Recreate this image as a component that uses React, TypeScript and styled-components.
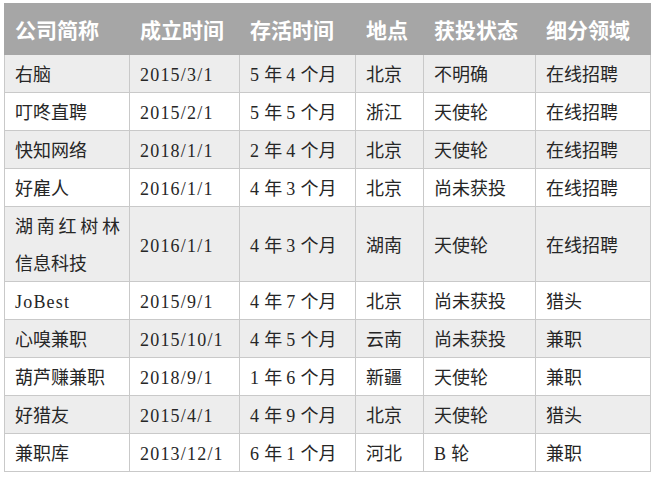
import React from "react";
import styled, { createGlobalStyle } from "styled-components";

const Global = createGlobalStyle`
  html, body { margin: 0; padding: 0; background: #ffffff; }
  body { font-family: "Noto Sans CJK SC", "Liberation Sans", sans-serif; }
`;

const Page = styled.div`
  padding: 3px 4px;
`;

const Table = styled.table`
  border-collapse: collapse;
  width: 646px;
  table-layout: fixed;
  color: #262626;
`;

const Col = styled.col<{ $w: number }>`
  width: ${(p) => p.$w}px;
`;

const HeadCell = styled.th`
  background: #a6a6a6;
  color: #ffffff;
  font-weight: 700;
  font-size: 21px;
  line-height: 49px;
  text-align: left;
  height: 50px;
  padding: 0 0 0 10px;
  border: 1px solid #a6a6a6;
  white-space: nowrap;
`;

const Row = styled.tr<{ $shade: boolean }>`
  background: ${(p) => (p.$shade ? "#ededed" : "#ffffff")};
`;

const Cell = styled.td<{ $justify?: boolean }>`
  border: 1px solid #c9c9c9;
  font-size: 18px;
  line-height: 37px;
  padding: 0 9px 0 10px;
  vertical-align: middle;
  text-align: ${(p) => (p.$justify ? "justify" : "left")};
  text-align-last: left;
`;

const Latin = styled.span`
  font-family: "Liberation Serif", serif;
  font-size: 18px;
  letter-spacing: 1.2px;
  line-height: 1;
`;

const cols = [125, 110, 116, 68, 112, 115];
const headers = ["公司简称", "成立时间", "存活时间", "地点", "获投状态", "细分领域"];

const rows: string[][] = [
  ["右脑", "2015/3/1", "5 年 4 个月", "北京", "不明确", "在线招聘"],
  ["叮咚直聘", "2015/2/1", "5 年 5 个月", "浙江", "天使轮", "在线招聘"],
  ["快知网络", "2018/1/1", "2 年 4 个月", "北京", "天使轮", "在线招聘"],
  ["好雇人", "2016/1/1", "4 年 3 个月", "北京", "尚未获投", "在线招聘"],
  ["湖南红树林信息科技", "2016/1/1", "4 年 3 个月", "湖南", "天使轮", "在线招聘"],
  ["JoBest", "2015/9/1", "4 年 7 个月", "北京", "尚未获投", "猎头"],
  ["心嗅兼职", "2015/10/1", "4 年 5 个月", "云南", "尚未获投", "兼职"],
  ["葫芦赚兼职", "2018/9/1", "1 年 6 个月", "新疆", "天使轮", "兼职"],
  ["好猎友", "2015/4/1", "4 年 9 个月", "北京", "天使轮", "猎头"],
  ["兼职库", "2013/12/1", "6 年 1 个月", "河北", "B 轮", "兼职"],
];

function renderText(text: string) {
  const parts = text.split(/([A-Za-z0-9\/]+)/);
  return parts.map((p, i) =>
    /^[A-Za-z0-9\/]+$/.test(p) ? <Latin key={i}>{p}</Latin> : <React.Fragment key={i}>{p}</React.Fragment>
  );
}

export default function App() {
  return (
    <Page>
      <Global />
      <Table>
        <colgroup>
          {cols.map((w, i) => (
            <Col key={i} $w={w} />
          ))}
        </colgroup>
        <thead>
          <tr>
            {headers.map((h) => (
              <HeadCell key={h}>{h}</HeadCell>
            ))}
          </tr>
        </thead>
        <tbody>
          {rows.map((r, i) => (
            <Row key={i} $shade={i % 2 === 0}>
              {r.map((c, j) => (
                <Cell key={j} $justify={j === 0}>
                  {renderText(c)}
                </Cell>
              ))}
            </Row>
          ))}
        </tbody>
      </Table>
    </Page>
  );
}
